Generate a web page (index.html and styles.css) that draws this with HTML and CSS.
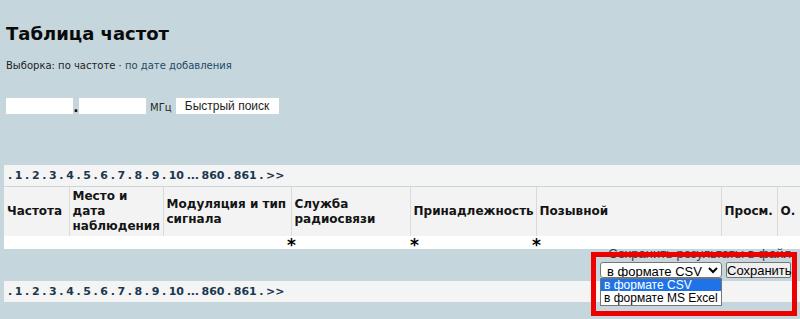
FILE: index.html
```html
<!DOCTYPE html>
<html lang="ru">
<head>
    <meta charset="UTF-8">
    <title>Таблица частот</title>
    <link rel="stylesheet" href="styles.css">
</head>
<body>
    <div class="page">
        <!-- Заголовок -->
        <h1 class="title">Таблица частот</h1>
        <p class="sort">Выборка: по частоте · <a href="#">по дате добавления</a></p>

        <!-- Быстрый поиск -->
        <form class="search">
            <input type="text" class="freq-input">
            <span class="dot">.</span>
            <input type="text" class="freq-input">
            <span class="unit">МГц</span>
            <button type="button" class="search-button">Быстрый поиск</button>
        </form>

        <div class="pager">
            . <a href="#">1</a> . <a href="#">2</a> . <a href="#">3</a> . <a href="#">4</a> . <a href="#">5</a> . <a href="#">6</a> . <a href="#">7</a> . <a href="#">8</a> . <a href="#">9</a> . <a href="#">10</a> ... <a href="#">860</a> . <a href="#">861</a> . <a href="#">&gt;&gt;</a>
        </div>

        <table class="freq-table">
            <colgroup>
                <col style="width: 65px">
                <col style="width: 94px">
                <col style="width: 128px">
                <col style="width: 119px">
                <col style="width: 126px">
                <col style="width: 185px">
                <col style="width: 56px">
                <col style="width: 60px">
            </colgroup>
            <thead>
                <tr>
                    <th>Частота</th>
                    <th>Место и дата наблюдения</th>
                    <th>Модуляция и тип сигнала</th>
                    <th>Служба радиосвязи</th>
                    <th>Принадлежность</th>
                    <th>Позывной</th>
                    <th>Просм.</th>
                    <th>О.</th>
                </tr>
            </thead>
            <tbody>
                <tr class="filter-row">
                    <td></td>
                    <td></td>
                    <td></td>
                    <td><span class="star">*</span></td>
                    <td><span class="star star-inset">*</span></td>
                    <td><span class="star">*</span></td>
                    <td></td>
                    <td></td>
                </tr>
            </tbody>
        </table>

        <!-- Сохранение -->
        <div class="save">
            <div class="save-label">Сохранить результаты в файл</div>
            <div class="save-controls">
                <div class="select-wrap">
                    <select class="save-select">
                        <option>в формате CSV</option>
                        <option>в формате MS Excel</option>
                    </select>
                    <ul class="options">
                        <li class="selected">в формате CSV</li>
                        <li>в формате MS Excel</li>
                    </ul>
                </div>
                <button type="button" class="save-button">Сохранить</button>
            </div>
        </div>

        <div class="pager">
            . <a href="#">1</a> . <a href="#">2</a> . <a href="#">3</a> . <a href="#">4</a> . <a href="#">5</a> . <a href="#">6</a> . <a href="#">7</a> . <a href="#">8</a> . <a href="#">9</a> . <a href="#">10</a> ... <a href="#">860</a> . <a href="#">861</a> . <a href="#">&gt;&gt;</a>
        </div>

        <!-- Выделение -->
        <div class="highlight"></div>
    </div>
</body>
</html>
```

FILE: styles.css
```css
* {
    margin: 0;
    padding: 0;
    box-sizing: border-box;
}

html, body {
    overflow: hidden;
}

body {
    background-color: rgb(197, 214, 221);
    font-family: "DejaVu Sans", Verdana, sans-serif;
    color: rgb(20, 20, 20);
}

.page {
    position: relative;
    width: 800px;
    height: 319px;
    padding: 23px 0 0 4px;
}

.title {
    font-size: 18px;
    line-height: 22px;
    font-weight: bold;
    color: rgb(10, 10, 10);
    margin-left: 2px;
}

.sort {
    font-size: 10px;
    line-height: 14px;
    margin: 14px 0 0 2px;
    color: rgb(30, 30, 30);
}

.sort a {
    color: rgb(33, 74, 102);
    text-decoration: none;
}

.search {
    display: flex;
    align-items: flex-end;
    margin: 25px 0 0 2px;
    height: 16px;
}

.freq-input {
    width: 67px;
    height: 16px;
    border: none;
    background: white;
}

.dot {
    font-size: 14px;
    font-weight: bold;
    line-height: 14px;
    width: 6px;
    text-align: center;
}

.unit {
    font-size: 10px;
    line-height: 13px;
    margin: 0 4px 0 4px;
    color: rgb(40, 40, 40);
}

.search-button {
    font-family: "Liberation Sans", Arial, sans-serif;
    font-size: 12px;
    height: 16px;
    width: 103px;
    border: none;
    background: white;
    color: rgb(30, 30, 30);
}

.pager {
    background: rgb(244, 244, 244);
    height: 21px;
    padding: 4px 0 0 4px;
    font-size: 11px;
    font-weight: bold;
    line-height: 14px;
    color: rgb(25, 55, 80);
    letter-spacing: -0.1px;
    word-spacing: -1px;
}

.search + .pager {
    margin-top: 51px;
}

.pager a {
    color: rgb(25, 55, 80);
    text-decoration: none;
}

.freq-table {
    table-layout: fixed;
    border-collapse: collapse;
    width: 833px;
    margin-top: 1px;
}

.freq-table th {
    background: rgb(243, 243, 243);
    height: 49px;
    font-size: 12px;
    line-height: 15px;
    font-weight: bold;
    text-align: left;
    vertical-align: middle;
    padding: 0 3px;
    border-left: 1px solid rgb(218, 218, 218);
}

.freq-table th:first-child {
    border-left: none;
}

.filter-row td {
    background: white;
    height: 13px;
    padding: 0;
    font-size: 0;
    line-height: 13px;
    vertical-align: top;
}

.star {
    display: inline-block;
    vertical-align: top;
    margin-left: -4px;
    font-size: 17px;
    font-weight: bold;
    line-height: 13px;
    height: 13px;
    padding-top: 3px;
    color: black;
}

.star-inset {
    margin-left: 0;
}

.save {
    height: 32px;
    padding: 0 9px 0 0;
    text-align: right;
    font-family: "Liberation Sans", Arial, sans-serif;
}

.save-label {
    font-size: 13px;
    line-height: 10px;
    height: 13px;
    color: rgb(60, 60, 60);
}

.save-controls {
    display: flex;
    justify-content: flex-end;
    gap: 4px;
}

.select-wrap {
    position: relative;
}

.save-select {
    font-family: "Liberation Sans", Arial, sans-serif;
    font-size: 13px;
    width: 122px;
    height: 16px;
    border: 1px solid rgb(118, 118, 118);
    border-radius: 3px;
    background: white;
    color: black;
    padding: 0 2px;
}

.options {
    position: absolute;
    left: 0;
    top: 16px;
    width: 122px;
    list-style: none;
    background: white;
    border: 1px solid rgb(118, 118, 118);
    text-align: left;
    font-size: 12px;
    line-height: 12px;
    white-space: nowrap;
    padding: 0;
}

.options li {
    padding: 0 3px;
    height: 12px;
    margin-bottom: 1px;
    color: black;
}

.options li.selected {
    background: rgb(30, 115, 232);
    color: white;
}

.save-button {
    font-family: "Liberation Sans", Arial, sans-serif;
    font-size: 13px;
    line-height: 13px;
    width: 65px;
    height: 16px;
    border: 1px solid rgb(118, 118, 118);
    border-radius: 2px;
    background: rgb(239, 239, 239);
    color: black;
}

.highlight {
    position: absolute;
    left: 591px;
    top: 252px;
    width: 206px;
    height: 64px;
    border: 5px solid rgb(236, 0, 0);
}
```
